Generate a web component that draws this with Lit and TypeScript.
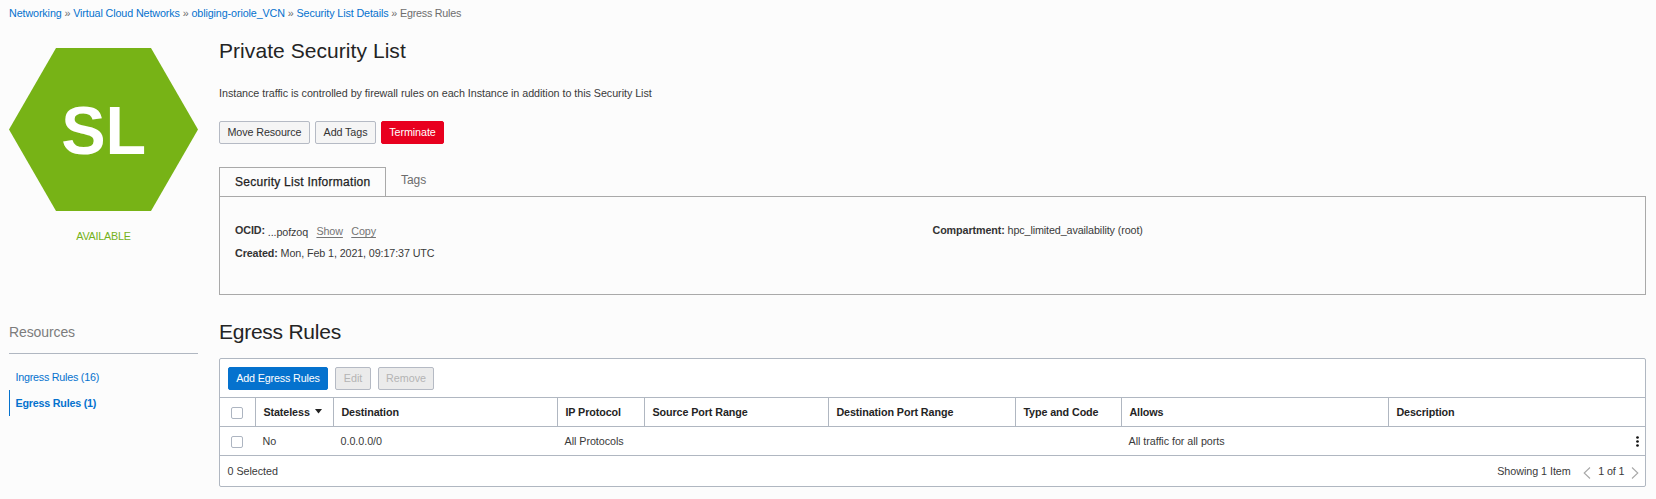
import { LitElement, html, css } from "lit";
import { customElement } from "lit/decorators.js";

const crumbs = ["Networking", "Virtual Cloud Networks", "obliging-oriole_VCN", "Security List Details"];

@customElement("rules-table")
class RulesTable extends LitElement {
  static styles = css`
    :host { display: block; height: 129px; box-sizing: border-box; border: 1px solid #b0b7c1; border-radius: 2px; background: #fff; }
    .toolbar { display: flex; align-items: center; gap: 7px; height: 38px; box-sizing: border-box; padding: 0 8px; }
    button { font: inherit; box-sizing: border-box; height: 23px; padding: 0; border: 1px solid #b5bac4; border-radius: 2px; text-align: center; white-space: nowrap; background: #ebebeb; color: #b4b4b4; line-height: 19px; }
    .add { width: 100px; background: #0572ce; border-color: #0572ce; color: #fff; letter-spacing: -0.15px; }
    .edit { width: 36px; }
    .remove { width: 56px; }
    .row { display: grid; grid-template-columns: 35px 78px 224px 87px 184px 187px 106px 267px 1fr; height: 28px; border-top: 1px solid #b0b7c1; line-height: 28px; }
    .row > span { padding-left: 7.5px; white-space: nowrap; }
    .head { font-weight: 700; color: #242424; letter-spacing: -0.09px; }
    .head > span + span { border-left: 1px solid #b0b7c1; padding-left: 7.4px; }
    .row > .pick { display: flex; padding: 9px 0 0 11px; }
    .box { box-sizing: border-box; width: 12px; height: 12px; border: 1px solid #adb5c1; border-radius: 2px; background: #fff; }
    .sort { margin-left: 2px; vertical-align: 2px; }
    .row > .last { display: flex; justify-content: flex-end; padding: 9px 6px 0 0; }
    .foot { display: flex; height: 30px; border-top: 1px solid #b0b7c1; line-height: 31px; padding: 0 6px 0 7.5px; }
    .grow { flex: 1; }
    .showing { margin-right: 12px; }
    .page { margin: 0 6.5px 0 7.5px; letter-spacing: -0.1px; }
    .chev { margin-top: 11px; }
  `;
  render() {
    const heads = ["IP Protocol", "Source Port Range", "Destination Port Range", "Type and Code", "Allows", "Description"];
    return html`
      <div class="toolbar"><button class="add">Add Egress Rules</button><button class="edit">Edit</button><button class="remove">Remove</button></div>
      <div class="row head">
        <span class="pick"><i class="box"></i></span>
        <span>Stateless <svg class="sort" width="7" height="5"><path d="M0 0h7L3.5 4.5z" fill="#222" /></svg></span>
        <span>Destination</span>${heads.map((h) => html`<span>${h}</span>`)}
      </div>
      <div class="row">
        <span class="pick"><i class="box"></i></span>
        <span>No</span><span>0.0.0.0/0</span><span>All Protocols</span><span></span><span></span><span></span>
        <span>All traffic for all ports</span>
        <span class="last"><svg width="3" height="11"><g fill="#111"><circle cx="1.5" cy="1.5" r="1.35" /><circle cx="1.5" cy="5.5" r="1.35" /><circle cx="1.5" cy="9.5" r="1.35" /></g></svg></span>
      </div>
      <div class="foot">
        <span>0 Selected</span><span class="grow"></span><span class="showing">Showing 1 Item</span>
        <svg class="chev" width="8" height="12" fill="none" stroke="#a8a8a8" stroke-width="1.1"><path d="M7 .5L1.2 6L7 11.5" /></svg>
        <span class="page">1 of 1</span>
        <svg class="chev" width="8" height="12" fill="none" stroke="#a8a8a8" stroke-width="1.1"><path d="M1 .5L6.8 6L1 11.5" /></svg>
      </div>`;
  }
}

@customElement("app-root")
class AppRoot extends LitElement {
  static styles = css`
    :host { display: block; height: 499px; overflow: hidden; background: #fcfcfc; color: #3a3a3a; font: 10.75px "Liberation Sans", Arial, sans-serif; letter-spacing: -0.045px; }
    nav { height: 26px; line-height: 26px; padding-left: 9px; color: #6e6e6e; letter-spacing: -0.115px; white-space: nowrap; }
    a { color: #0572ce; text-decoration: none; }
    .here { letter-spacing: -0.25px; }
    .page { display: grid; grid-template-columns: 189px 1427px; column-gap: 21px; padding-left: 9px; }
    .hex { display: block; margin-top: 22px; }
    .mark { font: 700 68.5px "Liberation Sans", Arial, sans-serif; letter-spacing: 0; fill: #fff; }
    .state { margin-top: 15px; line-height: 20px; text-align: center; color: #75b21a; letter-spacing: -0.2px; }
    .side-title { margin-top: 76px; height: 31px; line-height: 20px; border-bottom: 1px solid #b0b7c1; font-size: 14px; color: #7c7c7c; letter-spacing: -0.1px; }
    .links { padding-top: 10px; }
    .links a { display: block; height: 26px; line-height: 26px; padding-left: 6.5px; letter-spacing: -0.24px; }
    .links .on { box-shadow: inset 1px 0 #0572ce; font-weight: 700; letter-spacing: -0.22px; }
    h1 { margin: 10px 0 0; font-size: 21px; line-height: 30px; font-weight: 400; color: #242424; letter-spacing: 0.06px; }
    .second { margin-top: 22px; letter-spacing: -0.25px; }
    .table { margin-top: 11px; }
    .desc { margin-top: 17px; line-height: 20px; }
    .actions { display: flex; gap: 5px; margin-top: 18px; }
    button { font: inherit; color: #333; box-sizing: border-box; height: 23px; padding: 0; border: 1px solid #b5bac4; border-radius: 2px; background: #f5f5f5; text-align: center; line-height: 19px; letter-spacing: -0.1px; }
    .move { width: 91px; }
    .tag { width: 61px; }
    .kill { width: 63px; background: #e8001f; border-color: #e8001f; color: #fff; }
    .tabs { display: flex; height: 29px; margin-top: 23px; }
    .tab { box-sizing: border-box; width: 167px; border: 1px solid #a9a9a9; border-bottom: 0; height: 29px; padding-left: 15px; line-height: 28px; font-size: 12px; letter-spacing: 0.27px; color: #222; -webkit-text-stroke: 0.25px #222; white-space: nowrap; }
    .tab2 { padding-left: 15px; font-size: 12px; line-height: 26px; color: #6c6c6c; }
    .info { display: grid; grid-template-columns: 697.5px 1fr; align-items: start; box-sizing: border-box; height: 99px; border: 1px solid #a9a9a9; padding: 22px 0 0 15px; line-height: 23px; letter-spacing: -0.11px; }
    .info b { color: #333; }
    .info u { color: #757575; text-underline-offset: 1.5px; position: relative; top: -1px; }
    .ocid { position: relative; top: 2px; }
    .show { margin: 0 5.5px 0 5.5px; }
  `;
  render() {
    return html`
      <nav>${crumbs.map((c) => html`<a>${c}</a> » `)}<span class="here">Egress Rules</span></nav>
      <div class="page">
        <aside>
          <svg class="hex" width="189" height="163"><path d="M0 81.5L47 0h95L189 81.5L142 163H47z" fill="#77b316" /><text class="mark" x="52.2" y="106" textLength="85" lengthAdjust="spacingAndGlyphs">SL</text></svg>
          <div class="state">AVAILABLE</div>
          <div class="side-title">Resources</div>
          <div class="links"><a>Ingress Rules (16)</a><a class="on">Egress Rules (1)</a></div>
        </aside>
        <main>
          <h1>Private Security List</h1>
          <div class="desc">Instance traffic is controlled by firewall rules on each Instance in addition to this Security List</div>
          <div class="actions"><button class="move">Move Resource</button><button class="tag">Add Tags</button><button class="kill">Terminate</button></div>
          <div class="tabs"><div class="tab">Security List Information</div><div class="tab2">Tags</div></div>
          <section class="info">
            <div>
              <div><b>OCID:</b> <span class="ocid">...pofzoq <u class="show">Show</u> <u>Copy</u></span></div>
              <div><b>Created:</b> Mon, Feb 1, 2021, 09:17:37 UTC</div>
            </div>
            <div><b>Compartment:</b> hpc_limited_availability (root)</div>
          </section>
          <h1 class="second">Egress Rules</h1>
          <rules-table class="table"></rules-table>
        </main>
      </div>`;
  }
}
